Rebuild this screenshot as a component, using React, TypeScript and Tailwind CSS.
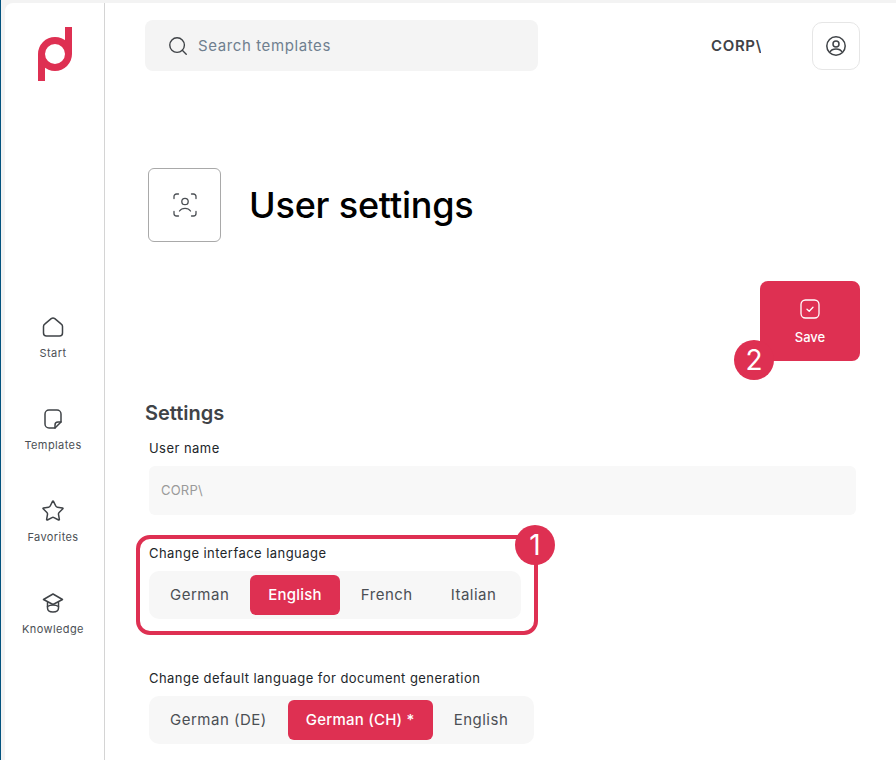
import React from 'react';
import { Search, Star } from 'lucide-react';

const NAV_ITEMS = [
  {
    label: 'Start',
    icon: (
      <svg width="24" height="24" viewBox="0 0 24 24" fill="none" stroke="#3f4347" strokeWidth="1.5" strokeLinejoin="round">
        <path d="M2.500 11.500c0-1 .4-1.800 1.200-2.400l6.500-5.400a3 3 0 0 1 3.600 0l6.500 5.400c.8.6 1.200 1.400 1.200 2.400V18a3 3 0 0 1-3 3h-13a3 3 0 0 1-3-3z" />
      </svg>
    ),
  },
  {
    label: 'Templates',
    icon: (
      <svg width="24" height="24" viewBox="0 0 24 24" fill="none" stroke="#3f4347" strokeWidth="1.5" strokeLinejoin="round" strokeLinecap="round">
        <path d="M14 21H8a4 4 0 0 1-4-4V7a4 4 0 0 1 4-4h8a4 4 0 0 1 4 4v8z" />
        <path d="M14 21v-3a3 3 0 0 1 3-3h3" />
      </svg>
    ),
  },
  {
    label: 'Favorites',
    icon: <Star size={24} strokeWidth={1.5} color="#3f4347" />,
  },
  {
    label: 'Knowledge',
    icon: (
      <svg width="24" height="24" viewBox="0 0 24 24" fill="none" stroke="#3f4347" strokeWidth="1.5" strokeLinejoin="round" strokeLinecap="round">
        <path d="M12 3 2.500 8.500 12 13.500l9.500-5z" />
        <path d="M6.500 11.500v5.500c0 2.500 2.500 4 5.500 4s5.500-1.500 5.500-4v-5.500" />
        <path d="M6.500 15.500c1.500-1 3.500-1.500 5.500-1.500s4 .5 5.500 1.500" />
      </svg>
    ),
  },
];

const Segment = ({ options, active, wrapClass }: { options: string[]; active: string; wrapClass: string }) => (
  <div className={`flex h-12 items-center gap-1 rounded-[10px] bg-[#f7f7f7] px-1 ${wrapClass}`}>
    {options.map((o) => (
      <div
        key={o}
        className={
          o === active
            ? 'flex h-10 items-center whitespace-nowrap rounded-md bg-[#de3052] px-[18px] pt-px text-[15px] font-medium tracking-[0.22px] text-white'
            : 'flex h-10 items-center whitespace-nowrap px-[17px] pt-px text-[15px] tracking-[0.5px] text-[#4b4f54]'
        }
      >
        {o}
      </div>
    ))}
  </div>
);

const Badge = ({ n, className }: { n: string; className: string }) => (
  <div className={`absolute flex h-10 w-10 items-center justify-center rounded-full bg-[#de3052] text-[28px] text-white ${className}`}>
    {n}
  </div>
);

export default function App() {
  return (
    <div className="h-[760px] w-[896px] overflow-hidden border-l border-l-[#03537f] bg-[#f3f3f3] pt-[3px] pl-1 font-['Inter',sans-serif]">
      <div className="flex h-full rounded-tl-lg bg-white">
        <aside className="flex h-full w-[100px] shrink-0 flex-col items-center border-r border-r-[#d4d4d4] pt-[24px]">
          <svg width="34" height="54" viewBox="0 0 34 54">
            <path fillRule="evenodd" d="M17 10a17 17 0 1 1 0 34 17 17 0 0 1 0-34zm0 7a10 10 0 1 0 0 20 10 10 0 0 0 0-20z" fill="#de3052" />
            <rect x="27" y="0" width="7" height="27" fill="#de3052" />
            <rect x="0" y="27" width="7" height="27" fill="#de3052" />
          </svg>
          <nav className="mr-[3px] mt-[234px] flex flex-col items-center gap-[39px]">
            {NAV_ITEMS.map((item) => (
              <div key={item.label} className="flex h-[53px] flex-col items-center">
                {item.icon}
                <span className="mt-[7px] text-[11px] leading-[15px] tracking-[0.4px] text-[#4b4f54]">{item.label}</span>
              </div>
            ))}
          </nav>
        </aside>

        <main className="relative flex-1 pl-10 pr-9">
          <header className="flex items-center pt-[17px]">
            <div className="flex h-[51px] w-[393px] items-center gap-[9px] rounded-lg bg-[#f4f4f4] pl-[22px]">
              <Search size={22} strokeWidth={1.5} color="#3f4347" />
              <span className="pt-px text-[15px] tracking-[0.6px] text-[#6f7f8f]">Search templates</span>
            </div>
            <div className="ml-[173px] w-[50px] overflow-hidden whitespace-nowrap pt-[2px] text-[15px] font-semibold tracking-[0.65px] text-[#3f4347]">
              {'CORP\\'}
            </div>
            <div className="ml-[51px] flex h-12 w-12 items-center justify-center rounded-[10px] border border-[#e6e6e6]">
              <svg width="22" height="22" viewBox="0 0 22 22" fill="none" stroke="#3f4347" strokeWidth="1.500">
                <circle cx="11" cy="11" r="9.200" />
                <circle cx="11" cy="9" r="3" />
                <path d="M5 17c1-2 3-3 6-3s5 1 6 3" />
              </svg>
            </div>
          </header>

          <div className="mt-[97px] flex items-center gap-7 pl-[3px]">
            <div className="flex h-[74px] w-[73px] items-center justify-center rounded-md border border-[#a9a9a9]">
              <svg width="24" height="24" viewBox="0 0 24 24" fill="none" stroke="#4b4f54" strokeWidth="1.300" strokeLinecap="round">
                <path d="M1 5.500V3.500A2.500 2.500 0 0 1 3.500 1H5.500M18.500 1h2A2.500 2.500 0 0 1 23 3.500v2M23 18.500v2a2.500 2.500 0 0 1-2.500 2.500h-2M5.500 23h-2A2.500 2.500 0 0 1 1 20.500v-2" />
                <circle cx="12" cy="8.500" r="3.200" />
                <path d="M6.500 18c1.200-1.800 3.200-2.700 5.500-2.700s4.300.9 5.500 2.700" />
              </svg>
            </div>
            <h1 className="text-[36px] font-medium leading-none tracking-[-0.2px] text-black">User settings</h1>
          </div>

          <div className="mt-[39px] flex justify-end">
            <div className="relative flex h-20 w-[100px] flex-col items-center rounded-lg bg-[#de3052] pt-[18px]">
              <svg width="20" height="20" viewBox="0 0 20 20" fill="none" stroke="#fff" strokeWidth="1.300" strokeLinecap="round" strokeLinejoin="round">
                <rect x="1" y="1" width="18" height="18" rx="4.500" />
                <path d="M7 10.200 9.200 12.200 13 8.200" />
              </svg>
              <span className="mt-[10px] text-[13px] font-medium leading-[16px] text-white">Save</span>
              <Badge n="2" className="-left-[26px] top-[59px]" />
            </div>
          </div>

          <h2 className="mt-[40px] text-[20px] font-semibold leading-[24px] text-[#3f4347]">Settings</h2>

          <div className="pl-1">
            <label className="mt-[15px] block text-[13px] leading-[16px] tracking-[0.45px] text-[#22262a]">User name</label>
            <div className="mr-1 mt-[10px] flex h-[49px] items-center rounded-md bg-[#f8f8f8] pl-3 text-[13px] tracking-[0.2px] text-[#9a9a9a]">
              {'CORP\\'}
            </div>

            <label className="mt-[30px] block text-[13px] leading-[16px] tracking-[0.45px] text-[#22262a]">Change interface language</label>
            <Segment options={['German', 'English', 'French', 'Italian']} active="English" wrapClass="mt-[10px] w-[372px]" />

            <label className="mt-[51px] block text-[13px] leading-[16px] tracking-[0.45px] text-[#22262a]">Change default language for document generation</label>
            <Segment options={['German (DE)', 'German (CH) *', 'English']} active="German (CH) *" wrapClass="mt-[10px] w-[385px]" />
          </div>

          <div className="absolute left-[31px] top-[532px] h-[100px] w-[402px] rounded-[14px] border-[4px] border-[#de3052]" />
          <Badge n="1" className="left-[410px] top-[522px]" />
        </main>
      </div>
    </div>
  );
}
